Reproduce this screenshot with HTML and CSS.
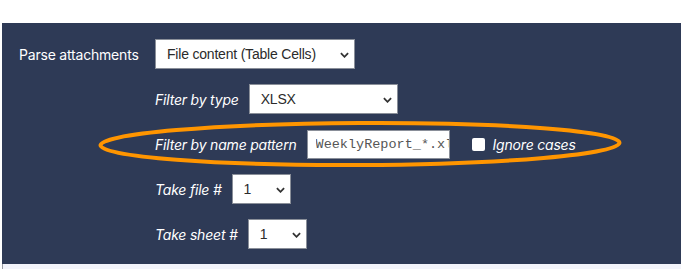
FILE: index.html
```html
<!DOCTYPE html>
<html lang="en">
<head>
    <meta charset="UTF-8">
    <title>Parse attachments</title>
    <link rel="stylesheet" href="styles.css">
</head>
<body>
    <div class="panel">
        <div class="row">
            <label class="main-label">Parse attachments</label>
            <span class="select-wrap wide">
                <select class="select"><option>File content (Table Cells)</option></select>
                <svg class="chevron" viewBox="0 0 10 6"><path d="M1 1 L5 5 L9 1" /></svg>
            </span>
        </div>

        <div class="sub-options">
            <div class="sub-row">
                <label class="sub-label">Filter by type</label>
                <span class="select-wrap type">
                    <select class="select"><option>XLSX</option></select>
                    <svg class="chevron" viewBox="0 0 10 6"><path d="M1 1 L5 5 L9 1" /></svg>
                </span>
            </div>
            <div class="sub-row">
                <label class="sub-label">Filter by name pattern</label>
                <input type="text" class="pattern-input" value="WeeklyReport_*.xlsx">
                <span class="check-box"></span>
                <label class="sub-label check-label">Ignore cases</label>
            </div>
            <div class="sub-row">
                <label class="sub-label">Take file #</label>
                <span class="select-wrap small">
                    <select class="select"><option>1</option></select>
                    <svg class="chevron" viewBox="0 0 10 6"><path d="M1 1 L5 5 L9 1" /></svg>
                </span>
            </div>
            <div class="sub-row">
                <label class="sub-label">Take sheet #</label>
                <span class="select-wrap small">
                    <select class="select"><option>1</option></select>
                    <svg class="chevron" viewBox="0 0 10 6"><path d="M1 1 L5 5 L9 1" /></svg>
                </span>
            </div>
        </div>

        <!-- annotation around the name pattern row -->
        <svg class="highlight" width="530" height="52" viewBox="0 0 530 52">
            <ellipse cx="263" cy="24" rx="259.5" ry="21" transform="rotate(-0.3 263 24)" />
        </svg>
    </div>
    <div class="below"></div>
</body>
</html>
```

FILE: styles.css
```css
* {
    margin: 0;
    padding: 0;
    box-sizing: border-box;
}

body {
    background: #ffffff;
    font-family: 'Inter', 'Roboto', sans-serif;
    height: 269px;
    overflow: hidden;
}

.panel {
    position: relative;
    margin-top: 23px;
    margin-left: 2px;
    background: #2e3a56;
    padding: 16px 0 15px 17px;
    color: #ffffff;
}

.row {
    display: flex;
    align-items: center;
}

.main-label {
    width: 136px;
    font-size: 14px;
    letter-spacing: -0.2px;
}

.sub-options {
    display: flex;
    flex-direction: column;
    gap: 15px;
    margin-top: 15px;
    padding-left: 136px;
}

.sub-row {
    display: flex;
    align-items: center;
    height: 30px;
}

.sub-label {
    font-size: 14px;
    font-style: italic;
    letter-spacing: -0.2px;
    margin-right: 10px;
}

.select-wrap {
    position: relative;
    display: inline-block;
    height: 30px;
}

.select-wrap.wide { width: 200px; }
.select-wrap.type { width: 149px; }
.select-wrap.small { width: 59px; }

.select {
    appearance: none;
    -webkit-appearance: none;
    width: 100%;
    height: 100%;
    background: #ffffff;
    border: 1px solid #8a8f99;
    border-radius: 0;
    padding-left: 11px;
    font-family: 'Liberation Sans', Arial, sans-serif;
    font-size: 14px;
    letter-spacing: -0.2px;
    color: #2b2b2b;
}

.chevron {
    position: absolute;
    right: 6px;
    top: 13px;
    width: 9px;
    height: 6px;
    fill: none;
    stroke: #333;
    stroke-width: 2;
}

.pattern-input {
    width: 143px;
    height: 29px;
    border: 1px solid #8a8f99;
    padding-left: 8px;
    font-family: 'Liberation Mono', monospace;
    font-size: 13.5px;
    color: #555;
    background: #ffffff;
    outline: none;
}

.check-box {
    display: inline-block;
    width: 13px;
    height: 13px;
    background: #ffffff;
    border-radius: 2px;
    margin-left: 22px;
    margin-right: 8px;
}

.check-label {
    margin-right: 0;
}

.highlight {
    position: absolute;
    left: 95px;
    top: 97px;
    fill: none;
    stroke: #ff9500;
    stroke-width: 4;
}

.below {
    height: 10px;
    margin-left: 2px;
    background: #f3f4fb;
    border-left: 1px solid #9a9ca3;
}
```
